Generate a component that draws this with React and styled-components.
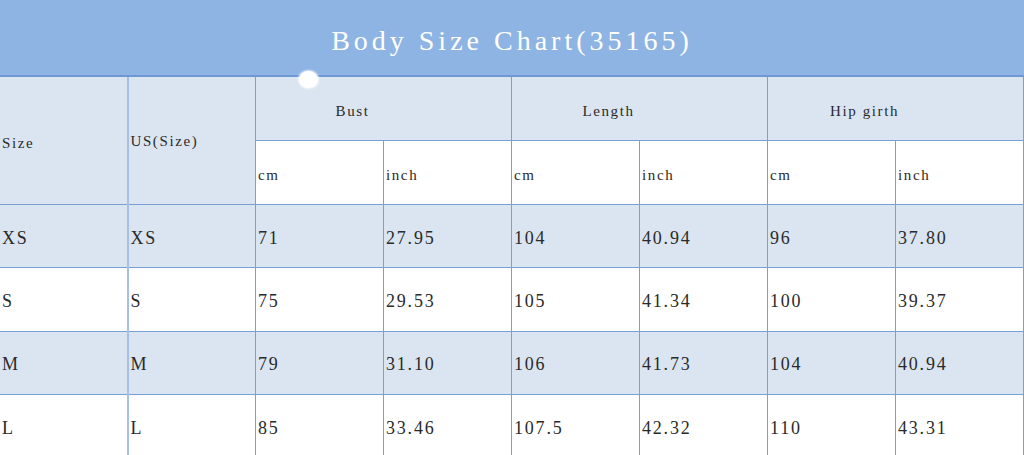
import styled, { createGlobalStyle } from 'styled-components'

const GlobalStyle = createGlobalStyle`
  html, body {
    margin: 0;
    padding: 0;
    background: #ffffff;
    overflow: hidden;
  }
`

const Page = styled.div`
  position: relative;
  width: 1024px;
  height: 455px;
  overflow: hidden;
  font-family: 'Liberation Serif', 'Times New Roman', serif;
  color: #2a2a2a;
`

const Banner = styled.div`
  height: 77px;
  display: flex;
  align-items: center;
  justify-content: center;
  background: #8eb4e3;
  border-bottom: 2px solid #6e98d2;
  color: #ffffff;
  font-size: 28px;
  letter-spacing: 4px;
  padding: 6px 0 0 0;
  box-sizing: border-box;
`

const Blob = styled.div`
  position: absolute;
  left: 299px;
  top: 71px;
  width: 19px;
  height: 17px;
  border-radius: 50%;
  background: #ffffff;
  box-shadow: 0 0 2px 1px rgba(255, 255, 255, 0.8);
`

const Table = styled.table`
  width: 1025px;
  border-collapse: collapse;
  table-layout: fixed;
  margin-left: -1px;
`

const Col = styled.col`
  width: 128px;
`

const Row = styled.tr`
  height: ${(p) => p.$h || 63.3}px;
  background: ${(p) => (p.$shaded ? '#dbe5f1' : '#ffffff')};
`

const Cell = styled.td`
  padding: ${(p) => p.$top || 4}px ${(p) => (p.$center ? 64 : 0)}px 0 2px;
  border: 1px solid #7b9fd3;
  border-top: none;
  font-size: ${(p) => p.$size || 18}px;
  letter-spacing: ${(p) => (p.$size ? 1.6 : 1.8)}px;
  text-align: ${(p) => (p.$center ? 'center' : 'left')};
  vertical-align: middle;
  white-space: nowrap;
  ${(p) => p.$soft && 'border-right: 2px solid #a6bfe2;'}
`

const rows = [
  ['XS', 'XS', '71', '27.95', '104', '40.94', '96', '37.80'],
  ['S', 'S', '75', '29.53', '105', '41.34', '100', '39.37'],
  ['M', 'M', '79', '31.10', '106', '41.73', '104', '40.94'],
  ['L', 'L', '85', '33.46', '107.5', '42.32', '110', '43.31'],
]

const groups = ['Bust', 'Length', 'Hip girth']

export default function App() {
  return (
    <Page>
      <GlobalStyle />
      <Banner>Body Size Chart(35165)</Banner>
      <Blob />
      <Table>
        <colgroup>
          {Array.from({ length: 8 }).map((_, i) => (
            <Col key={i} />
          ))}
        </colgroup>
        <tbody>
          <Row $shaded $h={63.5}>
            <Cell rowSpan={2} $size={15} $top={6} $soft>
              Size
            </Cell>
            <Cell rowSpan={2} $size={15} $top={2}>
              US(Size)
            </Cell>
            {groups.map((g) => (
              <Cell key={g} colSpan={2} $size={15} $top={6} $center>
                {g}
              </Cell>
            ))}
          </Row>
          <Row $h={64}>
            {groups.map((g) => [
              <Cell key={g + 'cm'} $size={15} $top={6}>
                cm
              </Cell>,
              <Cell key={g + 'in'} $size={15} $top={6}>
                inch
              </Cell>,
            ])}
          </Row>
          {rows.map((r, i) => (
            <Row key={r[0]} $shaded={i % 2 === 0}>
              {r.map((v, j) => (
                <Cell key={j} $soft={j === 0}>
                  {v}
                </Cell>
              ))}
            </Row>
          ))}
        </tbody>
      </Table>
    </Page>
  )
}
